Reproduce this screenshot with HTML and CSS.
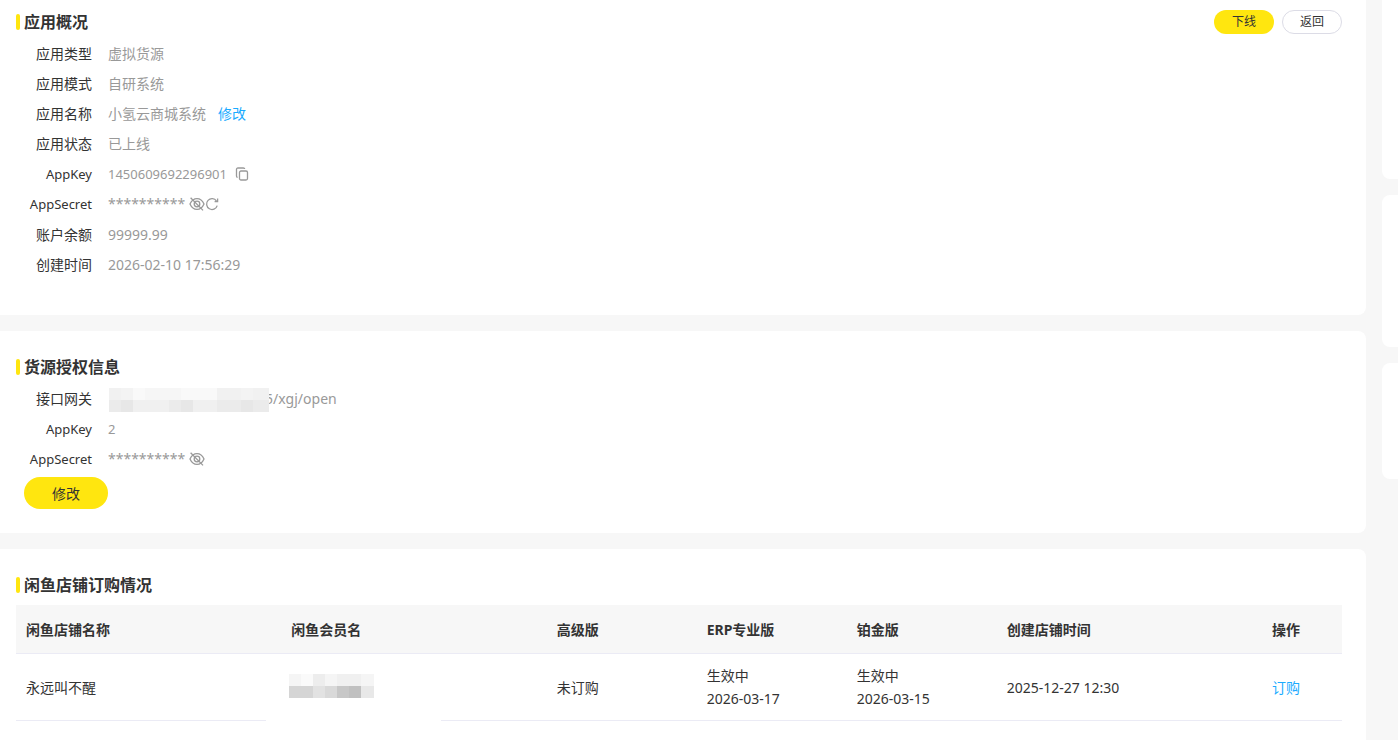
FILE: index.html
```html
<!DOCTYPE html>
<html lang="zh-CN">
<head>
<meta charset="utf-8">
<title>应用概况</title>
<link rel="stylesheet" href="styles.css">
</head>
<body>
<svg class="defs" width="0" height="0" aria-hidden="true">
  <symbol id="eye-off" viewBox="0 0 16 16">
    <path d="M1 8C2.600 4.400 5 2.600 8 2.600S13.400 4.400 15 8C13.400 11.600 11 13.400 8 13.400S2.600 11.600 1 8Z"/>
    <circle cx="8" cy="8" r="2.800"/>
    <path d="M1.600 1.800L14 14.400"/>
  </symbol>
  <symbol id="copy" viewBox="0 0 14 14">
    <rect x="4.500" y="4" width="8" height="9" rx="1.500"/>
    <path d="M2.600 10.300Q1.500 10.200 1.500 9V2.500Q1.500 1 3 1H8.300Q9.600 1 9.700 2"/>
  </symbol>
  <symbol id="refresh" viewBox="0 0 14 14">
    <path d="M12.200 8.600A5.400 5.400 0 1 1 11.500 4.100"/>
    <path d="M12.600 1.600V4.600H9.600"/>
  </symbol>
</svg>
<div class="page">
  <main class="main">
    <section class="card card-overview">
      <header class="card-head">
        <h2 class="title">应用概况</h2>
        <div class="actions">
          <button class="btn btn-small btn-primary" type="button">下线</button>
          <button class="btn btn-small btn-plain" type="button">返回</button>
        </div>
      </header>
      <dl class="info">
        <div class="row"><dt>应用类型</dt><dd>虚拟货源</dd></div>
        <div class="row"><dt>应用模式</dt><dd>自研系统</dd></div>
        <div class="row"><dt>应用名称</dt><dd>小氢云商城系统<a class="link link-edit" href="#">修改</a></dd></div>
        <div class="row"><dt>应用状态</dt><dd>已上线</dd></div>
        <div class="row row-key"><dt>AppKey</dt><dd>1450609692296901<button class="icon-btn icon-copy" type="button" aria-label="复制"><svg width="14" height="14"><use href="#copy"/></svg></button></dd></div>
        <div class="row row-key row-reset"><dt>AppSecret</dt><dd><span class="masked">**********</span><button class="icon-btn" type="button" aria-label="显示"><svg width="16" height="16"><use href="#eye-off"/></svg></button><button class="icon-btn" type="button" aria-label="重置"><svg width="14" height="14"><use href="#refresh"/></svg></button></dd></div>
        <div class="row"><dt>账户余额</dt><dd>99999.99</dd></div>
        <div class="row"><dt>创建时间</dt><dd>2026-02-10 17:56:29</dd></div>
      </dl>
    </section>

    <section class="card">
      <header class="card-head">
        <h2 class="title">货源授权信息</h2>
      </header>
      <dl class="info">
        <div class="row"><dt>接口网关</dt><dd>
          <svg class="mosaic" width="160" height="24" shape-rendering="crispEdges" aria-hidden="true">
            <rect width="160" height="12" fill="#f6f6f6"/><rect y="12" width="160" height="12" fill="#f0f0f0"/>
            <path fill="#f1f1f1" d="M0 0h12v12H0zM108 0h24v12h-24zM144 0h16v12h-16z"/>
            <path fill="#f3f3f3" d="M12 0h12v12H12zM132 0h12v12h-12z"/>
            <path fill="#f9f9f9" d="M24 0h12v12H24zM72 0h36v12H72z"/>
            <path fill="#ebebeb" d="M0 12h12v12H0zM60 12h12v12H60zM108 12h24v12h-24zM144 12h16v12h-16z"/>
            <path fill="#e7e7e7" d="M12 12h12v12H12zM72 12h12v12H72zM132 12h12v12h-12z"/>
          </svg><span class="gateway">5/xgj/open</span></dd></div>
        <div class="row row-key"><dt>AppKey</dt><dd>2</dd></div>
        <div class="row row-key"><dt>AppSecret</dt><dd><span class="masked">**********</span><button class="icon-btn" type="button" aria-label="显示"><svg width="16" height="16"><use href="#eye-off"/></svg></button></dd></div>
      </dl>
      <button class="btn btn-large btn-primary" type="button">修改</button>
    </section>

    <section class="card card-shops">
      <header class="card-head">
        <h2 class="title">闲鱼店铺订购情况</h2>
      </header>
      <table class="shops">
        <colgroup><col><col><col class="col-plan"><col class="col-plan"><col class="col-plan"><col><col class="col-action"></colgroup>
        <thead>
          <tr><th>闲鱼店铺名称</th><th>闲鱼会员名</th><th>高级版</th><th>ERP专业版</th><th>铂金版</th><th>创建店铺时间</th><th>操作</th></tr>
        </thead>
        <tbody>
          <tr>
            <td>永远叫不醒</td>
            <td class="member"><div class="member-cover">
              <svg width="85" height="24" shape-rendering="crispEdges" aria-hidden="true">
                <rect width="85" height="12" fill="#f5f5f5"/><rect y="12" width="85" height="12" fill="#d5d5d5"/>
                <path fill="#fafafa" d="M12 0h12v12H12z"/>
                <path fill="#ededed" d="M24 0h12v12H24z"/>
                <path fill="#f0f0f0" d="M48 0h24v12H48z"/>
                <path fill="#e2e2e2" d="M24 12h12v12H24z"/>
                <path fill="#d9d9d9" d="M36 12h12v12H36z"/>
                <path fill="#c7c7c7" d="M48 12h12v12H48z"/>
                <path fill="#c0c0c0" d="M60 12h12v12H60z"/>
                <path fill="#e8e8e8" d="M72 12h13v12H72z"/>
              </svg></div></td>
            <td>未订购</td>
            <td>生效中<br>2026-03-17</td>
            <td>生效中<br>2026-03-15</td>
            <td>2025-12-27 12:30</td>
            <td><a class="link" href="#">订购</a></td>
          </tr>
        </tbody>
      </table>
    </section>
  </main>
  <aside class="side">
    <div class="side-card side-first"></div>
    <div class="side-card side-second"></div>
    <div class="side-card side-third"></div>
  </aside>
</div>
</body>
</html>
```

FILE: styles.css
```css
* { box-sizing: border-box; }

body {
  margin: 0;
  background: #f7f7f7;
  color: #333;
  font: 14px/22px "Noto Sans", "Noto Sans CJK SC", sans-serif;
}

.defs { position: absolute; }

.page {
  display: grid;
  grid-template-columns: 1fr 16px;
  gap: 16px;
  min-height: 100vh;
}

.main, .side {
  display: flex;
  flex-direction: column;
  gap: 16px;
}

.card {
  padding: 24px 24px 24px 16px;
  background: #fff;
  border-radius: 0 8px 8px 0;
}
.card-overview { padding-top: 10px; padding-bottom: 35px; border-top-right-radius: 0; }
.card-shops { flex: 1; padding-bottom: 19px; border-bottom-right-radius: 0; }

.card-head {
  display: flex;
  align-items: center;
  justify-content: space-between;
  height: 24px;
}

.title {
  display: flex;
  align-items: center;
  gap: 4px;
  margin: 0;
  font-size: 16px;
  line-height: 24px;
}
.title::before {
  content: "";
  width: 4px;
  height: 16px;
  border-radius: 2px;
  background: #ffe60f;
}

.actions { display: flex; gap: 8px; }

.btn {
  border: 1px solid transparent;
  border-radius: 16px;
  padding: 0;
  color: #333;
  font-family: inherit;
}
.btn-small { width: 60px; height: 24px; font-size: 12px; line-height: 22px; }
.btn-large { display: block; width: 84px; height: 32px; margin: 3px 0 0 8px; font-size: 14px; }
.btn-primary { background: #ffe60f; }
.btn-plain { background: #fff; border-color: #dcdce6; }

.info { margin: 5px 0 0; }
.row {
  display: flex;
  align-items: center;
  gap: 16px;
  height: 30px;
}
.row-key { font-size: 13px; }
.row-reset { margin-bottom: 1px; }
.row dt { width: 76px; text-align: right; }
.row dd {
  display: flex;
  align-items: center;
  margin: 0;
  color: #999;
}
.masked { font-size: 14px; margin-right: 4px; }

.link { color: #1aabff; text-decoration: none; }
.link-edit { margin-left: 12px; }

.icon-btn {
  display: flex;
  border: 0;
  padding: 0;
  background: none;
  color: #999;
}
.icon-btn svg { fill: none; stroke: currentColor; stroke-width: 1.3; }
.icon-copy { margin-left: 8px; }

.mosaic { position: relative; margin: 2px 0 0 1px; }
.gateway { margin-left: -4px; }

.shops {
  width: 100%;
  margin-top: 8px;
  table-layout: fixed;
  border-collapse: separate;
  border-spacing: 0;
  text-align: left;
}
.col-plan { width: 150px; }
.col-action { width: 80px; }
.shops th, .shops td {
  padding: 10px;
  border-bottom: 1px solid #ebebf5;
  line-height: 23px;
}
.shops th { height: 49px; background: #f7f7f7; font-weight: 700; }
.shops td { height: 67px; }

.member { position: relative; }
.member-cover {
  position: absolute;
  inset: 0 auto -1px -15px;
  display: flex;
  align-items: center;
  width: 175px;
  padding: 0 0 3px 23px;
  background: #fff;
}

.side-card { background: #fff; border-radius: 8px 0 0 8px; }
.side-first { height: 179px; border-top-left-radius: 0; }
.side-second { height: 152px; }
.side-third { height: 116px; }
```
